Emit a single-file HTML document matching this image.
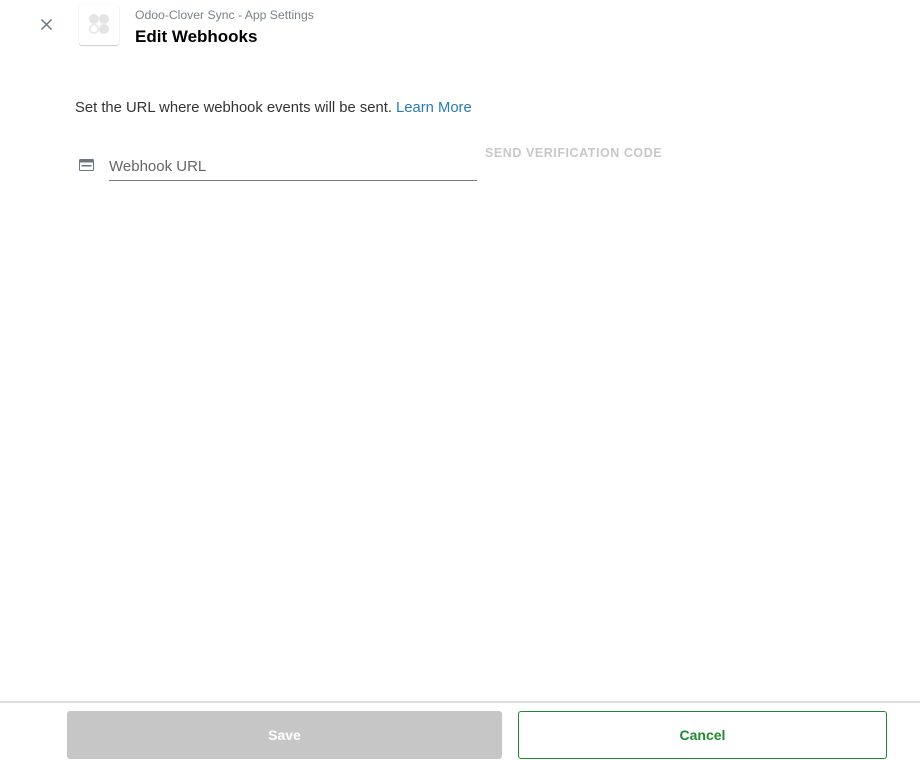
<!DOCTYPE html>
<html><head><meta charset="utf-8"><style>
body{margin:0;width:920px;height:760px;background:#fff;font-family:"Liberation Sans",sans-serif;position:relative;overflow:hidden}
.a{position:absolute;white-space:nowrap}
</style></head><body>
<svg class="a" style="left:40px;top:18px" width="13" height="13" viewBox="0 0 13 13"><path d="M1.5 1.5L11.5 11.5M11.5 1.5L1.5 11.5" stroke="#6b7780" stroke-width="1.5"/></svg>
<div class="a" style="left:79px;top:4px;width:40px;height:41px;border-radius:3px;background:#fff;box-shadow:0 1px 1px rgba(0,0,0,.2),0 0 1px rgba(0,0,0,.1)">
<svg width="40" height="40" viewBox="0 0 40 40"><circle cx="15" cy="15" r="5" fill="#e4e4e4"/><circle cx="25" cy="15" r="5" fill="#e4e4e4"/><circle cx="25" cy="25" r="5" fill="#e4e4e4"/><circle cx="15" cy="25" r="4.3" fill="none" stroke="#e4e4e4" stroke-width="1.4"/></svg></div>
<div class="a" style="left:135px;top:8px;font-size:12.2px;color:#7a8288">Odoo-Clover Sync - App Settings</div>
<div class="a" style="left:135px;top:27px;font-size:17px;font-weight:bold;color:#000">Edit Webhooks</div>
<div class="a" style="left:75px;top:100px;font-size:14.8px;color:#333">Set the URL where webhook events will be sent. <span style="color:#2a7ab5">Learn More</span></div>
<svg class="a" style="left:79px;top:159px" width="15" height="12" viewBox="0 0 15 12"><rect x="0.5" y="0.5" width="14" height="11" rx="1" fill="none" stroke="#6b7780"/><rect x="0.5" y="0.5" width="14" height="3" fill="#6b7780"/><rect x="2.5" y="6" width="10" height="1.5" fill="#6b7780"/></svg>
<div class="a" style="left:109px;top:158px;font-size:15px;color:#666">Webhook URL</div>
<div class="a" style="left:109px;top:180px;width:368px;height:1px;background:#777"></div>
<div class="a" style="left:485px;top:146px;font-size:12.5px;font-weight:bold;color:#c8c8c8;letter-spacing:.55px">SEND VERIFICATION CODE</div>
<div class="a" style="left:0;top:701px;width:920px;height:2px;background:#dcdcdc"></div>
<div class="a" style="left:67px;top:711px;width:435px;height:48px;background:#c6c6c6;border-radius:3px;color:#fff;font-size:14px;font-weight:bold;text-align:center;line-height:48px">Save</div>
<div class="a" style="left:518px;top:711px;width:367px;height:46px;border:1px solid #1e8a2e;border-radius:3px;color:#1e8a2e;font-size:14px;font-weight:bold;text-align:center;line-height:46px">Cancel</div>
</body></html>
